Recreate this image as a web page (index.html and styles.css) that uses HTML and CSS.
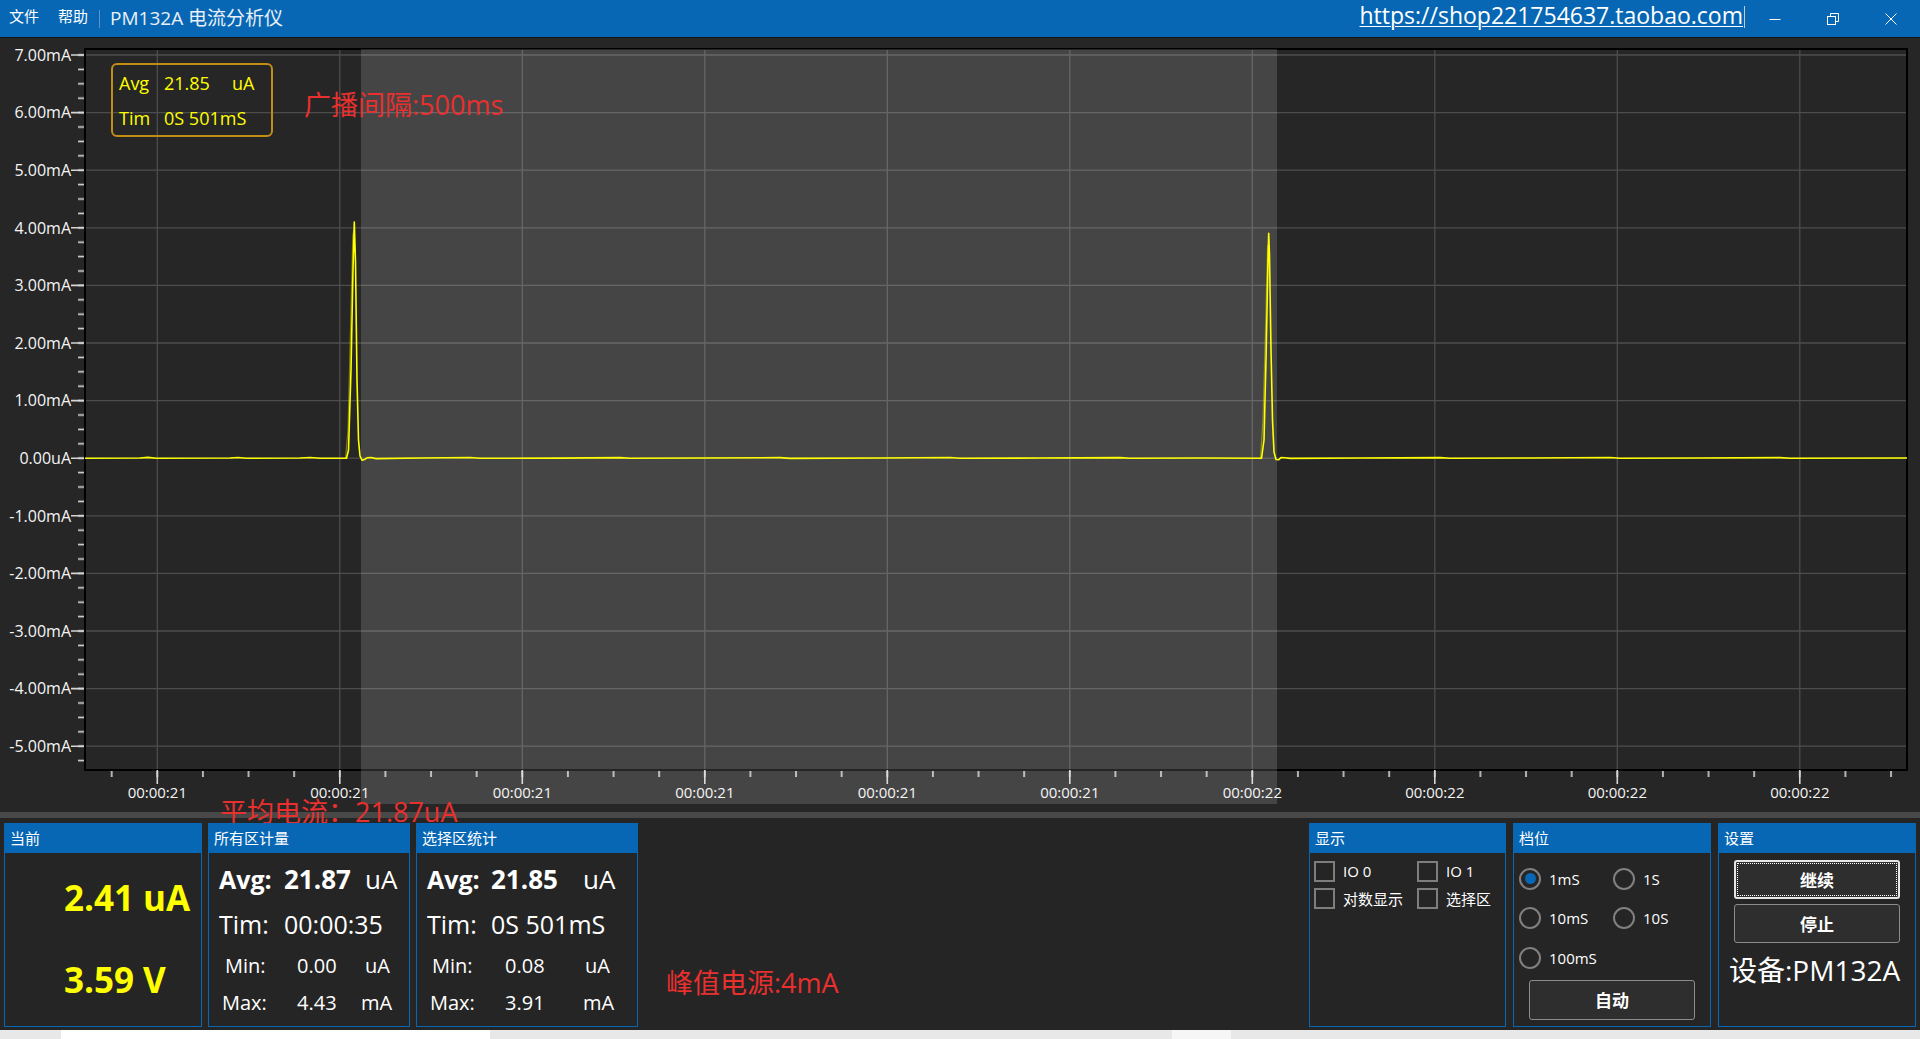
FILE: index.html
```html
<!DOCTYPE html>
<html lang="zh-CN">
<head>
<meta charset="utf-8">
<title>PM132A 电流分析仪</title>
<link rel="stylesheet" href="styles.css">
</head>
<body>
<div class="app">
  <header class="titlebar">
    <nav class="menu"><span>文件</span><span>帮助</span></nav>
    <span class="sep"></span>
    <span class="title">PM132A 电流分析仪</span>
    <span class="spacer"></span>
    <a class="url">https://shop221754637.taobao.com</a>
    <span class="caret"></span>
    <div class="winbtns">
      <span class="wb"><svg width="12" height="12" viewBox="0 0 12 12"><path d="M0.5 6.5H11.5" stroke="#fff" stroke-width="1" fill="none"/></svg></span>
      <span class="wb"><svg width="12" height="12" viewBox="0 0 12 12"><rect x="0.5" y="3.5" width="8" height="8" stroke="#fff" stroke-width="1" fill="none"/><path d="M3.5 3.5V0.5H11.5V8.5H8.5" stroke="#fff" stroke-width="1" fill="none"/></svg></span>
      <span class="wb"><svg width="12" height="12" viewBox="0 0 12 12"><path d="M0.5 0.5L11.5 11.5M11.5 0.5L0.5 11.5" stroke="#fff" stroke-width="1" fill="none"/></svg></span>
    </div>
  </header>

  <section class="chart">
    <svg class="plot" width="1920" height="774" viewBox="0 38 1920 774" xmlns="http://www.w3.org/2000/svg">
      <defs>
        <pattern id="ytick" patternUnits="userSpaceOnUse" x="0" y="47.8" width="20" height="14.4">
          <rect x="0" y="6.4" width="20" height="1.6" fill="#d6d6d6"/>
        </pattern>
        <pattern id="xtick" patternUnits="userSpaceOnUse" x="134.49" y="0" width="45.625" height="20">
          <rect x="22" y="0" width="1.6" height="20" fill="#d6d6d6"/>
        </pattern>
      </defs>

      <!-- grid -->
      <path class="grid" d="M85 55H1908M85 112.6H1908M85 170.2H1908M85 227.8H1908M85 285.4H1908M85 343H1908M85 400.6H1908M85 458.2H1908M85 515.8H1908M85 573.4H1908M85 631H1908M85 688.6H1908M85 746.2H1908
        M157.3 49V770M339.8 49V770M522.3 49V770M704.8 49V770M887.3 49V770M1069.8 49V770M1252.3 49V770M1434.8 49V770M1617.3 49V770M1799.8 49V770"/>

      <!-- plot frame -->
      <path class="frame" d="M85 49H1907V770H85Z"/>

      <!-- ticks -->
      <rect x="78" y="48" width="6" height="722" fill="url(#ytick)"/>
      <path class="tick" d="M71 55H84M71 112.6H84M71 170.2H84M71 227.8H84M71 285.4H84M71 343H84M71 400.6H84M71 458.2H84M71 515.8H84M71 573.4H84M71 631H84M71 688.6H84M71 746.2H84"/>
      <rect x="87" y="771" width="1820" height="6" fill="url(#xtick)"/>
      <path class="tick" d="M157.3 770V784M339.8 770V784M522.3 770V784M704.8 770V784M887.3 770V784M1069.8 770V784M1252.3 770V784M1434.8 770V784M1617.3 770V784M1799.8 770V784"/>

      <!-- y labels -->
      <g class="ylab">
        <text x="71" y="55" dy="0.36em">7.00mA</text>
        <text x="71" y="112.6" dy="0.36em">6.00mA</text>
        <text x="71" y="170.2" dy="0.36em">5.00mA</text>
        <text x="71" y="227.8" dy="0.36em">4.00mA</text>
        <text x="71" y="285.4" dy="0.36em">3.00mA</text>
        <text x="71" y="343" dy="0.36em">2.00mA</text>
        <text x="71" y="400.6" dy="0.36em">1.00mA</text>
        <text x="71" y="458.2" dy="0.36em">0.00uA</text>
        <text x="71" y="515.8" dy="0.36em">-1.00mA</text>
        <text x="71" y="573.4" dy="0.36em">-2.00mA</text>
        <text x="71" y="631" dy="0.36em">-3.00mA</text>
        <text x="71" y="688.6" dy="0.36em">-4.00mA</text>
        <text x="71" y="746.2" dy="0.36em">-5.00mA</text>
      </g>

      <!-- x labels -->
      <g class="xlab">
        <text x="157.3" y="798">00:00:21</text>
        <text x="339.8" y="798">00:00:21</text>
        <text x="522.3" y="798">00:00:21</text>
        <text x="704.8" y="798">00:00:21</text>
        <text x="887.3" y="798">00:00:21</text>
        <text x="1069.8" y="798">00:00:21</text>
        <text x="1252.3" y="798">00:00:22</text>
        <text x="1434.8" y="798">00:00:22</text>
        <text x="1617.3" y="798">00:00:22</text>
        <text x="1799.8" y="798">00:00:22</text>
      </g>

      <!-- selection -->
      <rect class="sel" x="361" y="49" width="916" height="755"/>

      <!-- trace -->
      <path class="ghost" d="M345.5 458.3L348 430L350.5 330L352.8 236L353.8 230M1260.5 458.3L1263 420L1265.5 330L1267.6 245"/>
      <path class="trace" d="M85 458.3L140 458L148 457.4L156 458.3L230 458L238 457.5L246 458.3L300 458L310 457.5L320 458.3L346.5 458.3L348.5 450L351 370L353 270L354.3 222L355.5 262L357 380L358.5 440L360 456L362 460.2L364.5 459.5L367 457.8L371 457.5L376 458.6L420 458L470 457.5L480 458.3L560 458.1L620 457.6L630 458.3L700 458L780 457.6L790 458.4L880 458L950 457.5L960 458.3L1040 458L1120 457.6L1130 458.3L1200 458L1261.5 458.3L1264 440L1266 360L1268 260L1268.7 233.3L1269.5 255L1271 350L1272.5 420L1274 452L1276 459.5L1278.5 459.8L1281 457.6L1285 457.8L1290 458.4L1360 458L1440 457.6L1450 458.3L1530 458L1610 457.5L1620 458.3L1700 458L1780 457.6L1790 458.3L1907 458"/>
    </svg>

    <div class="statbox">
      <span class="sk">Avg</span><span class="sv">21.85</span><span class="su">uA</span>
      <span class="sk">Tim</span><span class="sv tim">0S 501mS</span>
    </div>
    <div class="note note-interval">广播间隔:500ms</div>
  </section>

  <div class="divider"></div>

  <div class="note note-avg">平均电流：21.87uA</div>
  <div class="note note-peak">峰值电源:4mA</div>

  <section class="panels">
    <div class="group group-left">
      <div class="panel p-now">
        <div class="ph">当前</div>
        <div class="pb now-body">
          <div class="big-val">2.41 uA</div>
          <div class="big-val volt">3.59 V</div>
        </div>
      </div>
      <div class="panel p-all">
        <div class="ph">所有区计量</div>
        <div class="pb">
          <div class="row r-avg"><span class="k">Avg:</span><span class="v">21.87</span><span class="u">uA</span></div>
          <div class="row r-tim"><span class="k">Tim:</span><span class="v">00:00:35</span></div>
          <div class="row r-min"><span class="k">Min:</span><span class="v">0.00</span><span class="u">uA</span></div>
          <div class="row r-max"><span class="k">Max:</span><span class="v">4.43</span><span class="u">mA</span></div>
        </div>
      </div>
      <div class="panel p-sel">
        <div class="ph">选择区统计</div>
        <div class="pb">
          <div class="row r-avg"><span class="k">Avg:</span><span class="v">21.85</span><span class="u">uA</span></div>
          <div class="row r-tim"><span class="k">Tim:</span><span class="v">0S 501mS</span></div>
          <div class="row r-min"><span class="k">Min:</span><span class="v">0.08</span><span class="u">uA</span></div>
          <div class="row r-max"><span class="k">Max:</span><span class="v">3.91</span><span class="u">mA</span></div>
        </div>
      </div>
    </div>

    <div class="group group-right">
      <div class="panel p-show">
        <div class="ph">显示</div>
        <div class="pb checks">
          <label class="chk"><span class="box"></span>IO 0</label>
          <label class="chk"><span class="box"></span>IO 1</label>
          <label class="chk"><span class="box"></span>对数显示</label>
          <label class="chk"><span class="box"></span>选择区</label>
        </div>
      </div>
      <div class="panel p-range">
        <div class="ph">档位</div>
        <div class="pb">
          <div class="radios">
            <label class="rad"><span class="ring on"></span>1mS</label>
            <label class="rad"><span class="ring"></span>1S</label>
            <label class="rad"><span class="ring"></span>10mS</label>
            <label class="rad"><span class="ring"></span>10S</label>
            <label class="rad"><span class="ring"></span>100mS</label>
          </div>
          <button class="btn btn-auto">自动</button>
        </div>
      </div>
      <div class="panel p-set">
        <div class="ph">设置</div>
        <div class="pb set-body">
          <button class="btn btn-focus">继续</button>
          <button class="btn btn-stop">停止</button>
          <div class="device">设备:PM132A</div>
        </div>
      </div>
    </div>
  </section>

  <footer class="status">
    <span class="st-white"></span>
    <span class="st-light"></span>
  </footer>
</div>
</body>
</html>
```

FILE: styles.css
```css
* {
  box-sizing: border-box;
  margin: 0;
  padding: 0;
}

html, body {
  width: 1920px;
  height: 1039px;
  overflow: hidden;
  background: #252525;
}

body {
  font-family: "Open Sans", "Noto Sans CJK SC", sans-serif;
  color: #ffffff;
}

.app {
  position: relative;
  width: 1920px;
  height: 1039px;
  display: flex;
  flex-direction: column;
}

/* ---------- title bar ---------- */
.titlebar {
  height: 38px;
  flex: none;
  background: #0767b4;
  border-bottom: 1px solid #141414;
  display: flex;
  align-items: center;
}

.menu {
  display: flex;
  gap: 19px;
  padding-left: 9px;
  font-size: 15px;
  line-height: 20px;
  margin-top: -6px;
}

.sep {
  width: 1px;
  height: 18px;
  background: #5d93c8;
  margin-left: 11px;
  margin-top: 1px;
}

.title {
  margin-left: 10px;
  font-size: 19px;
  line-height: 24px;
  color: #e9f0f8;
  margin-top: -1px;
}

.spacer {
  flex: 1;
}

.url {
  font-size: 23px;
  line-height: 26px;
  color: #ffffff;
  text-decoration: underline;
  text-underline-offset: 2px;
  text-decoration-thickness: 1px;
  margin-top: -7px;
}

.caret {
  width: 1px;
  height: 22px;
  background: #b9cde3;
  margin-left: 1px;
  margin-top: -4px;
}

.winbtns {
  display: flex;
  margin-left: 1px;
}

.wb {
  width: 58px;
  height: 37px;
  display: flex;
  align-items: center;
  justify-content: center;
}

.wb svg {
  display: block;
}

/* ---------- chart ---------- */
.chart {
  position: relative;
  height: 774px;
  flex: none;
  background: #262626;
}

.plot {
  display: block;
}

.grid {
  stroke: #4d4d4d;
  stroke-width: 1.3;
  fill: none;
}

.frame {
  stroke: #000000;
  stroke-width: 2;
  fill: none;
}

.tick {
  stroke: #d6d6d6;
  stroke-width: 1.6;
  fill: none;
}

.ylab text {
  font-family: "Open Sans", sans-serif;
  font-size: 16px;
  fill: #f4f4f4;
  text-anchor: end;
}

.xlab text {
  font-family: "Open Sans", sans-serif;
  font-size: 15px;
  fill: #f4f4f4;
  text-anchor: middle;
}

.sel {
  fill: rgba(255, 255, 255, 0.145);
}

.trace {
  stroke: #ffff00;
  stroke-width: 1.6;
  fill: none;
  stroke-linejoin: round;
}

.ghost {
  stroke: #e6e600;
  stroke-width: 1.2;
  stroke-opacity: 0.45;
  fill: none;
}

.statbox {
  position: absolute;
  left: 111px;
  top: 25px;
  width: 162px;
  height: 74px;
  border: 2px solid #c28c16;
  border-radius: 6px;
  display: grid;
  grid-template-columns: 45px 68px auto;
  grid-template-rows: 35px 35px;
  align-items: center;
  padding-left: 6px;
  color: #ffff00;
  font-size: 18px;
}

.statbox .tim {
  grid-column: 2 / 4;
}

.note {
  position: absolute;
  color: #e8302f;
  font-size: 27px;
  line-height: 36px;
  white-space: nowrap;
  z-index: 1;
}

.note-interval {
  left: 304px;
  top: 49px;
}

.note-avg {
  left: 220px;
  top: 794px;
}

.note-peak {
  left: 666px;
  top: 965px;
}

.divider {
  height: 6px;
  flex: none;
  background: #484848;
}

/* ---------- panels ---------- */
.panels {
  position: relative;
  z-index: 2;
  height: 212px;
  flex: none;
  display: flex;
  padding: 5px 4px 3px 4px;
}

.group {
  display: flex;
}

.group-left {
  gap: 6px;
}

.group-right {
  gap: 7px;
  margin-left: auto;
}

.panel {
  height: 204px;
  border: 1px solid #0767b4;
  background: #252525;
  display: flex;
  flex-direction: column;
}

.p-now { width: 198px; }
.p-all { width: 202px; }
.p-sel { width: 222px; }
.p-show { width: 197px; }
.p-range { width: 198px; }
.p-set { width: 198px; }

.ph {
  height: 29px;
  flex: none;
  background: #0767b4;
  font-size: 15px;
  line-height: 29px;
  padding-left: 5px;
  color: #ffffff;
}

.pb {
  flex: 1;
  padding-top: 4px;
}

/* current */
.now-body {
  padding-top: 23px;
  padding-left: 59px;
}

.big-val {
  font-size: 35px;
  font-weight: 700;
  line-height: 44px;
  color: #ffff00;
  white-space: nowrap;
}

.big-val.volt {
  margin-top: 38px;
}

/* stats rows */
.row {
  display: grid;
  align-items: center;
  white-space: nowrap;
}

.r-avg {
  height: 44px;
  font-size: 26px;
}

.r-avg .k {
  font-weight: 700;
  font-size: 25px;
}

.r-avg .v {
  font-weight: 700;
}

.r-tim {
  height: 46px;
  font-size: 25px;
}

.r-min,
.r-max {
  height: 37px;
  font-size: 20px;
}

.p-all .r-avg,
.p-all .r-tim {
  padding-left: 10px;
  grid-template-columns: 65px 81px auto;
}

.p-all .r-min {
  padding-left: 16px;
  grid-template-columns: 72px 68px auto;
}

.p-all .r-max {
  padding-left: 13px;
  grid-template-columns: 75px 64px auto;
}

.p-sel .r-avg,
.p-sel .r-tim {
  padding-left: 10px;
  grid-template-columns: 64px 92px auto;
}

.p-sel .r-min {
  padding-left: 15px;
  grid-template-columns: 73px 80px auto;
}

.p-sel .r-max {
  padding-left: 13px;
  grid-template-columns: 75px 78px auto;
}

/* checkboxes */
.checks {
  display: grid;
  grid-template-columns: 103px auto;
  grid-auto-rows: 22px;
  row-gap: 5px;
  padding: 7px 0 0 4px;
  align-content: start;
}

.chk {
  display: flex;
  align-items: center;
  font-size: 15px;
  color: #ffffff;
  white-space: nowrap;
}

.box {
  width: 21px;
  height: 21px;
  border: 2px solid #7e7e7e;
  margin-right: 8px;
  flex: none;
}

/* radios */
.radios {
  display: grid;
  grid-template-columns: 94px auto;
  grid-auto-rows: 39.5px;
  padding: 2px 0 0 5px;
}

.rad {
  display: flex;
  align-items: center;
  font-size: 15px;
  color: #ffffff;
  white-space: nowrap;
}

.ring {
  width: 22px;
  height: 22px;
  border: 2px solid #808080;
  border-radius: 50%;
  margin-right: 8px;
  flex: none;
  display: flex;
  align-items: center;
  justify-content: center;
}

.ring.on::after {
  content: "";
  width: 11px;
  height: 11px;
  border-radius: 50%;
  background: #0767b4;
}

.btn {
  display: block;
  background: #2e2e2e;
  border: 1px solid #8c8c8c;
  border-radius: 3px;
  color: #ffffff;
  font-family: "Open Sans", "Noto Sans CJK SC", sans-serif;
  font-size: 17px;
  font-weight: 700;
  width: 166px;
}

.btn-auto {
  height: 40px;
  margin: 2px 0 0 15px;
}

.set-body {
  padding-top: 7px;
}

.btn-focus {
  height: 39px;
  margin-left: 15px;
  border: 2px solid #e6e6e6;
  outline: 1px dotted #ffffff;
  outline-offset: -4px;
}

.btn-stop {
  height: 39px;
  margin: 5px 0 0 15px;
}

.device {
  margin-top: 7px;
  padding-left: 10px;
  font-size: 28px;
  line-height: 40px;
  color: #ffffff;
  white-space: nowrap;
}

/* ---------- status strip ---------- */
.status {
  height: 9px;
  flex: none;
  background: #e8e8e8;
  position: relative;
  display: flex;
}

.st-white {
  width: 429px;
  height: 9px;
  margin-left: 61px;
  background: #ffffff;
}

.st-light {
  width: 59px;
  height: 9px;
  margin-left: 682px;
  background: #f6f6f6;
}
```
